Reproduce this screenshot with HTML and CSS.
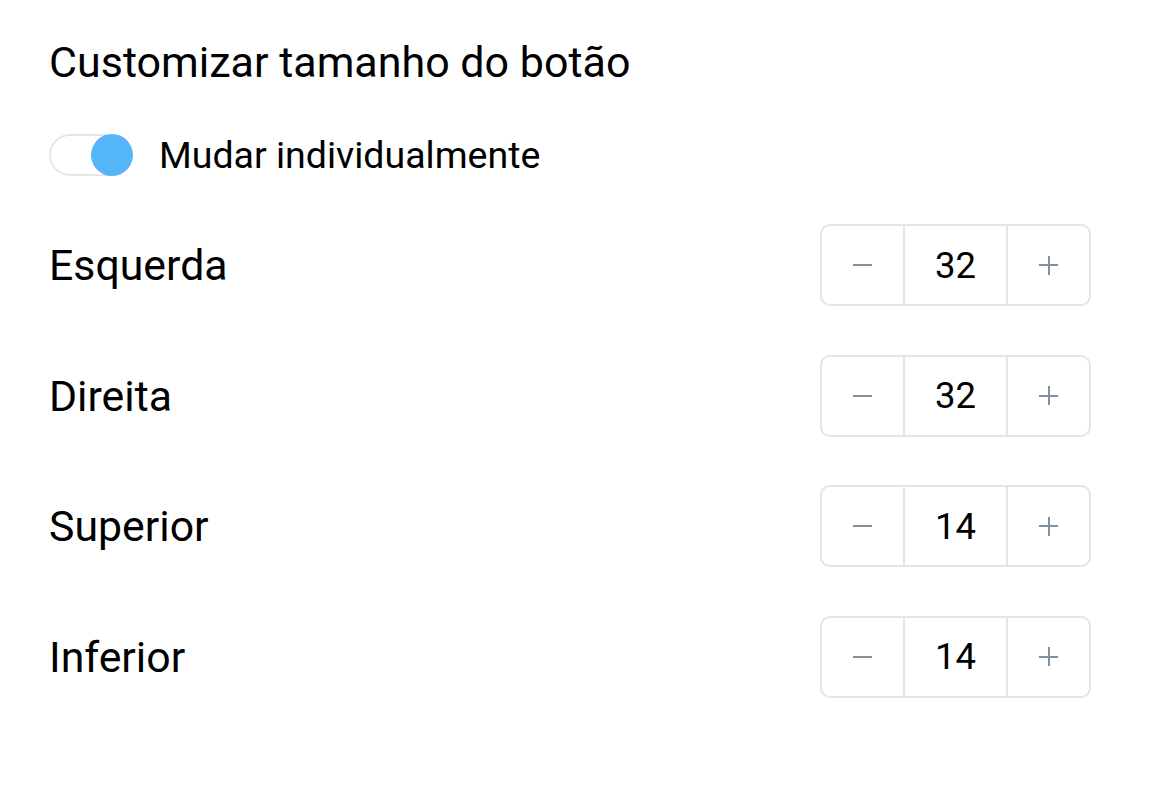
FILE: index.html
```html
<!DOCTYPE html>
<html lang="pt">
<head>
<meta charset="utf-8">
<link rel="stylesheet" href="styles.css">
</head>
<body>
<div class="panel">
  <h1 class="title">Customizar tamanho do botão</h1>
  <div class="toggle-row">
    <div class="toggle"><span class="knob"></span></div>
    <span class="toggle-label">Mudar individualmente</span>
  </div>
  <div class="rows">
    <div class="row">
      <span class="label">Esquerda</span>
      <div class="stepper"><span class="btn minus"><i></i></span><span class="value">32</span><span class="btn plus"><i></i><b></b></span></div>
    </div>
    <div class="row">
      <span class="label">Direita</span>
      <div class="stepper"><span class="btn minus"><i></i></span><span class="value">32</span><span class="btn plus"><i></i><b></b></span></div>
    </div>
    <div class="row">
      <span class="label">Superior</span>
      <div class="stepper"><span class="btn minus"><i></i></span><span class="value">14</span><span class="btn plus"><i></i><b></b></span></div>
    </div>
    <div class="row">
      <span class="label">Inferior</span>
      <div class="stepper"><span class="btn minus"><i></i></span><span class="value">14</span><span class="btn plus"><i></i><b></b></span></div>
    </div>
  </div>
</div>
</body>
</html>
```
FILE: styles.css
```css
* { box-sizing: border-box; }
html, body { margin: 0; padding: 0; background: #fff; }
body { font-family: Roboto, "Liberation Sans", sans-serif; color: #000; }
.panel { padding: 36px 59px 0 49px; }
.title { margin: 0; font-size: 43px; font-weight: 400; line-height: 52px; }
.toggle-row { display: flex; align-items: center; margin-top: 45px; height: 44px; }
.toggle { position: relative; width: 78px; height: 42px; border: 2px solid #e6e6e6; border-radius: 21px; background: #fff; }
.knob { position: absolute; right: -8px; top: -2px; width: 42px; height: 42px; border-radius: 50%; background: #55b5f9; }
.toggle-label { margin-left: 32px; font-size: 37.5px; line-height: 44px; }
.rows { margin-top: 47px; display: flex; flex-direction: column; gap: 48.5px; }
.row { display: flex; align-items: center; justify-content: space-between; height: 82px; }
.label { font-size: 42.8px; }
.stepper { display: flex; width: 271px; height: 82px; border: 2px solid #e4e4e4; border-radius: 10px; }
.btn { position: relative; display: flex; align-items: center; justify-content: center; }
.minus { width: 83px; border-right: 2px solid #e4e4e4; }
.plus { flex: 1; border-left: 2px solid #e4e4e4; }
.value { width: 101px; display: flex; align-items: center; justify-content: center; font-size: 36.5px; }
.btn i { display: block; width: 19px; height: 2px; background: #8190a0; }
.plus b { position: absolute; left: 50%; top: 50%; width: 2px; height: 19px; margin: -9.5px 0 0 -1px; background: #8190a0; }
```
